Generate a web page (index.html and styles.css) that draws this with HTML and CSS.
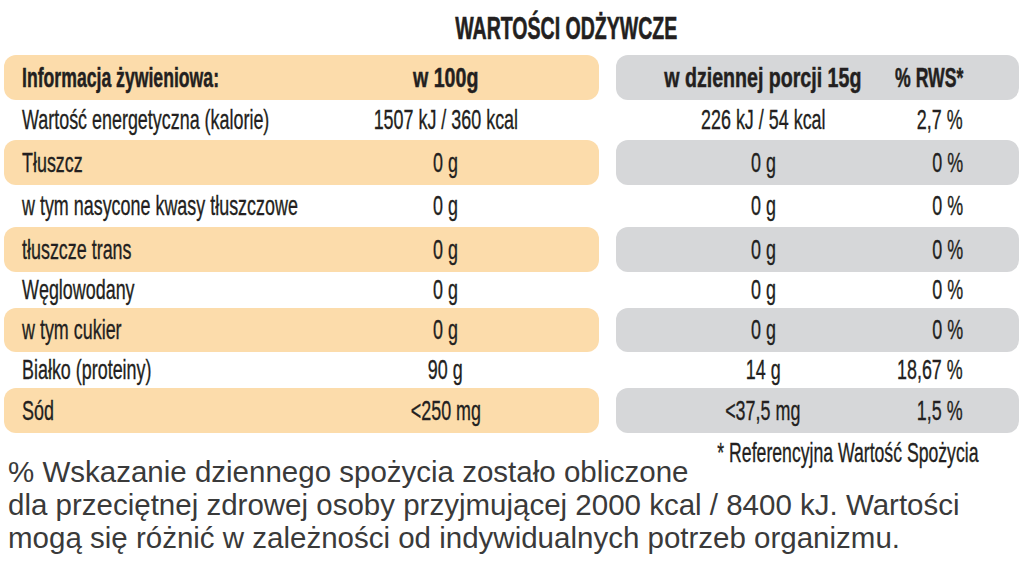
FILE: index.html
```html
<!DOCTYPE html>
<html lang="pl">
<head>
<meta charset="utf-8">
<title>Wartości odżywcze</title>
<link rel="stylesheet" href="styles.css">
</head>
<body>
<div class="page">
  <h1 class="title"><span class="sx sx--title">WARTOŚCI ODŻYWCZE</span></h1>

  <div class="table">
    <div class="row row--pill row--head">
      <div class="seg seg--main">
        <div class="cell cell--label"><span class="sx sx--bold">Informacja żywieniowa:</span></div>
        <div class="cell cell--val"><span class="sx sx--boldnum">w 100g</span></div>
      </div>
      <div class="seg seg--portion">
        <div class="cell cell--val"><span class="sx sx--boldnum">w dziennej porcji 15g</span></div>
        <div class="cell cell--pct"><span class="sx sx--bold">% RWS*</span></div>
      </div>
    </div>

    <div class="row">
      <div class="seg seg--main">
        <div class="cell cell--label"><span class="sx">Wartość energetyczna (kalorie)</span></div>
        <div class="cell cell--val"><span class="sx">1507 kJ / 360 kcal</span></div>
      </div>
      <div class="seg seg--portion">
        <div class="cell cell--val"><span class="sx">226 kJ / 54 kcal</span></div>
        <div class="cell cell--pct"><span class="sx">2,7 %</span></div>
      </div>
    </div>

    <div class="row row--pill">
      <div class="seg seg--main">
        <div class="cell cell--label"><span class="sx">Tłuszcz</span></div>
        <div class="cell cell--val"><span class="sx">0 g</span></div>
      </div>
      <div class="seg seg--portion">
        <div class="cell cell--val"><span class="sx">0 g</span></div>
        <div class="cell cell--pct"><span class="sx">0 %</span></div>
      </div>
    </div>

    <div class="row">
      <div class="seg seg--main">
        <div class="cell cell--label"><span class="sx">w tym nasycone kwasy tłuszczowe</span></div>
        <div class="cell cell--val"><span class="sx">0 g</span></div>
      </div>
      <div class="seg seg--portion">
        <div class="cell cell--val"><span class="sx">0 g</span></div>
        <div class="cell cell--pct"><span class="sx">0 %</span></div>
      </div>
    </div>

    <div class="row row--pill">
      <div class="seg seg--main">
        <div class="cell cell--label"><span class="sx">tłuszcze trans</span></div>
        <div class="cell cell--val"><span class="sx">0 g</span></div>
      </div>
      <div class="seg seg--portion">
        <div class="cell cell--val"><span class="sx">0 g</span></div>
        <div class="cell cell--pct"><span class="sx">0 %</span></div>
      </div>
    </div>

    <div class="row">
      <div class="seg seg--main">
        <div class="cell cell--label"><span class="sx">Węglowodany</span></div>
        <div class="cell cell--val"><span class="sx">0 g</span></div>
      </div>
      <div class="seg seg--portion">
        <div class="cell cell--val"><span class="sx">0 g</span></div>
        <div class="cell cell--pct"><span class="sx">0 %</span></div>
      </div>
    </div>

    <div class="row row--pill">
      <div class="seg seg--main">
        <div class="cell cell--label"><span class="sx">w tym cukier</span></div>
        <div class="cell cell--val"><span class="sx">0 g</span></div>
      </div>
      <div class="seg seg--portion">
        <div class="cell cell--val"><span class="sx">0 g</span></div>
        <div class="cell cell--pct"><span class="sx">0 %</span></div>
      </div>
    </div>

    <div class="row">
      <div class="seg seg--main">
        <div class="cell cell--label"><span class="sx">Białko (proteiny)</span></div>
        <div class="cell cell--val"><span class="sx">90 g</span></div>
      </div>
      <div class="seg seg--portion">
        <div class="cell cell--val"><span class="sx">14 g</span></div>
        <div class="cell cell--pct"><span class="sx">18,67 %</span></div>
      </div>
    </div>

    <div class="row row--pill">
      <div class="seg seg--main">
        <div class="cell cell--label"><span class="sx">Sód</span></div>
        <div class="cell cell--val"><span class="sx">&lt;250 mg</span></div>
      </div>
      <div class="seg seg--portion">
        <div class="cell cell--val"><span class="sx">&lt;37,5 mg</span></div>
        <div class="cell cell--pct"><span class="sx">1,5 %</span></div>
      </div>
    </div>
  </div>

  <div class="note"><span class="sx sx--note">* Referencyjna Wartość Spożycia</span></div>

  <p class="disclaimer">% Wskazanie dziennego spożycia zostało obliczone<br>dla przeciętnej zdrowej osoby przyjmującej 2000 kcal / 8400 kJ. Wartości<br>mogą się różnić w zależności od indywidualnych potrzeb organizmu.</p>
</div>
</body>
</html>
```

FILE: styles.css
```css
html, body {
  margin: 0;
  padding: 0;
  background: #ffffff;
}

body {
  font-family: "Liberation Sans", Arial, sans-serif;
  color: #231f20;
  width: 1027px;
  height: 570px;
  overflow: hidden;
}

.page {
  display: flex;
  flex-direction: column;
}

/* condensed text emulation */
.sx {
  display: inline-block;
  white-space: nowrap;
  transform: scaleX(var(--sx, 0.64));
  -webkit-text-stroke: 0.35px currentColor;
}
.sx--bold { --sx: 0.63; -webkit-text-stroke: 0.5px currentColor; }
.sx--boldnum { --sx: 0.7; -webkit-text-stroke: 0.5px currentColor; }
.sx--title { --sx: 0.63; -webkit-text-stroke: 0.6px currentColor; }
.sx--note { --sx: 0.63; }

.title {
  margin: 11px 0 8px;
  padding-left: 105px;
  font-size: 31px;
  line-height: 36px;
  font-weight: 700;
  text-align: center;
  color: #231f20;
}
.title .sx { transform-origin: center; }

.table {
  margin-left: 4px;
  display: grid;
  grid-template-rows: 45px 40px 45px 42px 45px 36px 44px 36px 45px;
}

.row {
  display: grid;
  grid-template-columns: 595px 403px;
  column-gap: 17px;
  font-size: 28px;
  line-height: 1;
}

.row--head { font-weight: 700; }

.seg {
  display: grid;
  align-items: center;
  border-radius: 12px;
}

.seg--main {
  grid-template-columns: 288px 307px;
}

.seg--portion {
  grid-template-columns: 294px 53px;
  padding-right: 56px;
}

.row--pill .seg--main { background: #fcdcab; }
.row--pill .seg--portion { background: #d6d7d9; }

.cell {
  display: flex;
  align-items: center;
  height: 100%;
}

.cell--label {
  padding-left: 18px;
  justify-content: flex-start;
}
.cell--label .sx { transform-origin: left center; }

.cell--val { justify-content: center; }
.cell--val .sx { transform-origin: center; }

.cell--pct { justify-content: flex-end; }
.cell--pct .sx { transform-origin: right center; }

.note {
  margin-top: 6px;
  height: 28px;
  padding-right: 49px;
  font-size: 28px;
  line-height: 28px;
  text-align: right;
}
.note .sx { transform-origin: right center; }

.disclaimer {
  margin: -12px 0 0;
  padding-left: 8px;
  font-size: 29.5px;
  line-height: 33px;
  color: #3a3a3a;
  white-space: nowrap;
}
```
